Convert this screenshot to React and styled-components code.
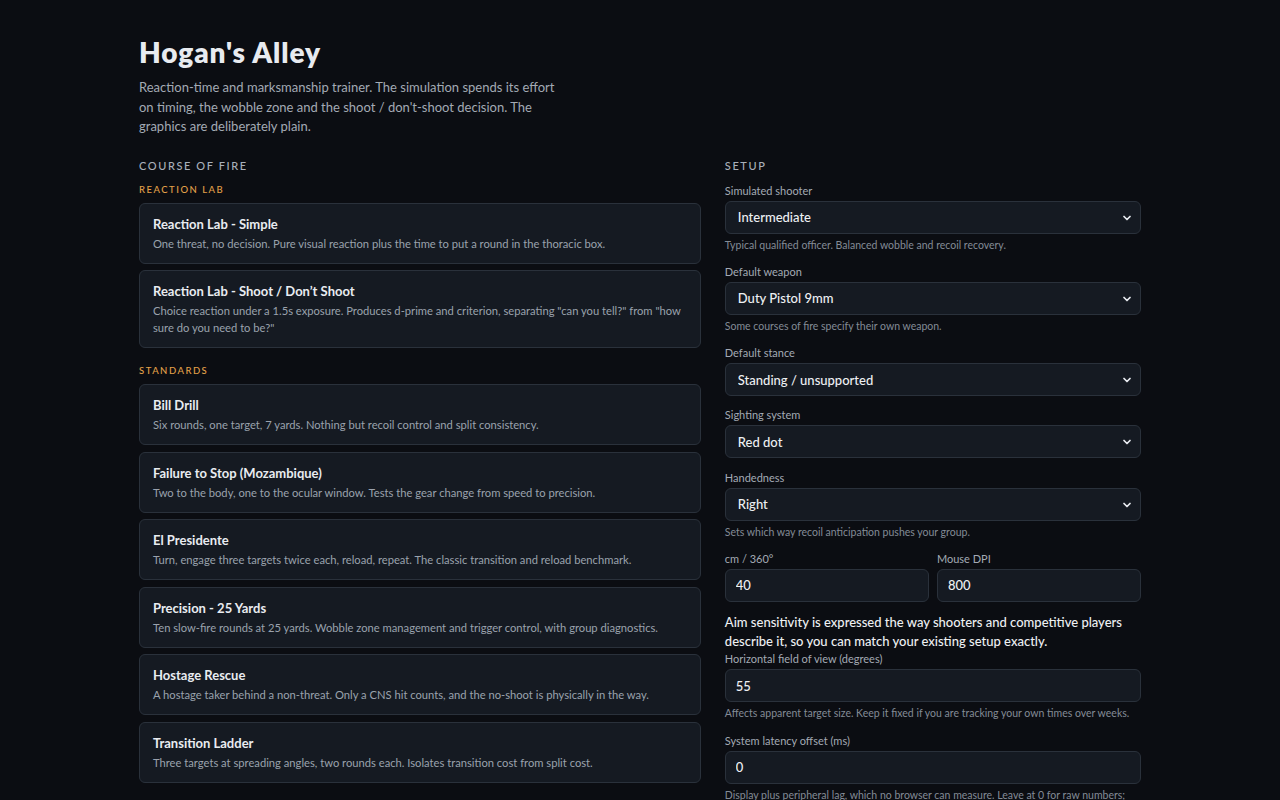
import React from 'react';
import styled, { createGlobalStyle } from 'styled-components';
import { ChevronDown } from 'lucide-react';

const Global = createGlobalStyle`
  html, body {
    margin: 0;
    background: #0b0d12;
  }
  body {
    font-family: Lato, "Liberation Sans", sans-serif;
    color: #e4e7ec;
  }
  * { box-sizing: border-box; }
`

const Page = styled.div`
  width: 1002px;
  margin: 0 auto;
  padding: 34px 0 40px;
`

const Title = styled.h1`
  margin: 0;
  font-size: 28px;
  font-weight: 800;
  letter-spacing: 0.9px;
  color: #e8ebf0;
  line-height: 36px;
`

const Intro = styled.p`
  margin: 8px 0 0;
  max-width: 420px;
  font-size: 13px;
  line-height: 19.5px;
  color: #a3aab4;
`

const Columns = styled.div`
  display: grid;
  grid-template-columns: 1.35fr 1fr;
  gap: 24px;
  margin-top: 21px;
`

const Column = styled.section`
  display: flex;
  flex-direction: column;
`

const Heading = styled.h2`
  margin: 0 0 9px;
  font-size: 11px;
  font-weight: 500;
  letter-spacing: 1.6px;
  color: #a9b0ba;
  line-height: 16px;
`

const Group = styled.h3`
  margin: ${p => (p.$first ? '0' : '16px')} 0 6px;
  font-size: 9.5px;
  font-weight: 500;
  letter-spacing: 1.5px;
  color: #e2a049;
  line-height: 14px;
`

const CardList = styled.div`
  display: flex;
  flex-direction: column;
  gap: 6.5px;
`

const Card = styled.div`
  background: #151a22;
  border: 1px solid #2a313b;
  border-radius: 6px;
  padding: 11px 13px 11px;
`

const CardTitle = styled.div`
  font-size: 13px;
  font-weight: 700;
  color: #e9ecf1;
  line-height: 18px;
`

const CardText = styled.div`
  margin-top: 2px;
  font-size: 11.2px;
  color: #9aa2ad;
  line-height: 17px;
`

const Field = styled.div`
  display: flex;
  flex-direction: column;
  margin-bottom: 11.3px;
`

const Label = styled.label`
  font-size: 11px;
  color: #a3aab4;
  line-height: 15px;
  margin-bottom: 3px;
`

const Hint = styled.div`
  margin-top: 4px;
  font-size: 10.5px;
  color: #838b96;
  line-height: 15px;
`

const SelectWrap = styled.div`
  position: relative;
`

const Select = styled.select`
  appearance: none;
  display: block;
  width: 100%;
  height: 33px;
  padding: 0 30px 0 12px;
  background: #151a22;
  border: 1px solid #2a313b;
  border-radius: 6px;
  color: #eef0f3;
  font-family: inherit;
  font-size: 13px;
  font-weight: 500;
  outline: none;
`

const Chevron = styled(ChevronDown)`
  position: absolute;
  right: 8px;
  top: 11px;
  pointer-events: none;
  color: #e8ebf0;
`

const Input = styled.input`
  display: block;
  width: 100%;
  height: 33px;
  padding: 0 10px;
  background: #151a22;
  border: 1px solid #2a313b;
  border-radius: 6px;
  color: #eef0f3;
  font-family: inherit;
  font-size: 13px;
  font-weight: 500;
  outline: none;
`

const Pair = styled.div`
  display: grid;
  grid-template-columns: 1fr 1fr;
  gap: 8px;
`

const Note = styled.p`
  margin: 0;
  font-size: 13px;
  line-height: 19px;
  color: #eef0f3;
  font-weight: 500;
`

const groups = [
  {
    name: 'REACTION LAB',
    courses: [
      ['Reaction Lab - Simple', 'One threat, no decision. Pure visual reaction plus the time to put a round in the thoracic box.'],
      ['Reaction Lab - Shoot / Don\u2019t Shoot', 'Choice reaction under a 1.5s exposure. Produces d-prime and criterion, separating "can you tell?" from "how sure do you need to be?"'],
    ],
  },
  {
    name: 'STANDARDS',
    courses: [
      ['Bill Drill', 'Six rounds, one target, 7 yards. Nothing but recoil control and split consistency.'],
      ['Failure to Stop (Mozambique)', 'Two to the body, one to the ocular window. Tests the gear change from speed to precision.'],
      ['El Presidente', 'Turn, engage three targets twice each, reload, repeat. The classic transition and reload benchmark.'],
      ['Precision - 25 Yards', 'Ten slow-fire rounds at 25 yards. Wobble zone management and trigger control, with group diagnostics.'],
      ['Hostage Rescue', 'A hostage taker behind a non-threat. Only a CNS hit counts, and the no-shoot is physically in the way.'],
      ['Transition Ladder', 'Three targets at spreading angles, two rounds each. Isolates transition cost from split cost.'],
    ],
  },
];

const selects = [
  { label: 'Simulated shooter', value: 'Intermediate', hint: 'Typical qualified officer. Balanced wobble and recoil recovery.' },
  { label: 'Default weapon', value: 'Duty Pistol 9mm', hint: 'Some courses of fire specify their own weapon.' },
  { label: 'Default stance', value: 'Standing / unsupported' },
  { label: 'Sighting system', value: 'Red dot' },
  { label: 'Handedness', value: 'Right', hint: 'Sets which way recoil anticipation pushes your group.' },
];

const SelectField = ({ label, value, hint }) => (
  <Field>
    <Label>{label}</Label>
    <SelectWrap>
      <Select defaultValue={value}>
        <option>{value}</option>
      </Select>
      <Chevron size={12} strokeWidth={3.5} />
    </SelectWrap>
    {hint && <Hint>{hint}</Hint>}
  </Field>
);

export default function App() {
  return (
    <Page>
      <Global />
      <Title>Hogan's Alley</Title>
      <Intro>
        Reaction-time and marksmanship trainer. The simulation spends its effort on timing, the wobble zone
        and the shoot / don't-shoot decision. The graphics are deliberately plain.
      </Intro>
      <Columns>
        <Column>
          <Heading>COURSE OF FIRE</Heading>
          {groups.map((g, i) => (
            <div key={g.name}>
              <Group $first={i === 0}>{g.name}</Group>
              <CardList>
                {g.courses.map(([t, d]) => (
                  <Card key={t}>
                    <CardTitle>{t}</CardTitle>
                    <CardText>{d}</CardText>
                  </Card>
                ))}
              </CardList>
            </div>
          ))}
        </Column>
        <Column>
          <Heading>SETUP</Heading>
          {selects.map(s => (
            <SelectField key={s.label} {...s} />
          ))}
          <Pair>
            <Field>
              <Label>cm / 360°</Label>
              <Input defaultValue="40" />
            </Field>
            <Field>
              <Label>Mouse DPI</Label>
              <Input defaultValue="800" />
            </Field>
          </Pair>
          <Note>
            Aim sensitivity is expressed the way shooters and competitive players describe it, so you can match
            your existing setup exactly.
          </Note>
          <Field>
            <Label>Horizontal field of view (degrees)</Label>
            <Input defaultValue="55" />
            <Hint>Affects apparent target size. Keep it fixed if you are tracking your own times over weeks.</Hint>
          </Field>
          <Field>
            <Label>System latency offset (ms)</Label>
            <Input defaultValue="0" />
            <Hint>
              Display plus peripheral lag, which no browser can measure. Leave at 0 for raw numbers; set it once
              you know your rig.
            </Hint>
          </Field>
        </Column>
      </Columns>
    </Page>
  );
}
